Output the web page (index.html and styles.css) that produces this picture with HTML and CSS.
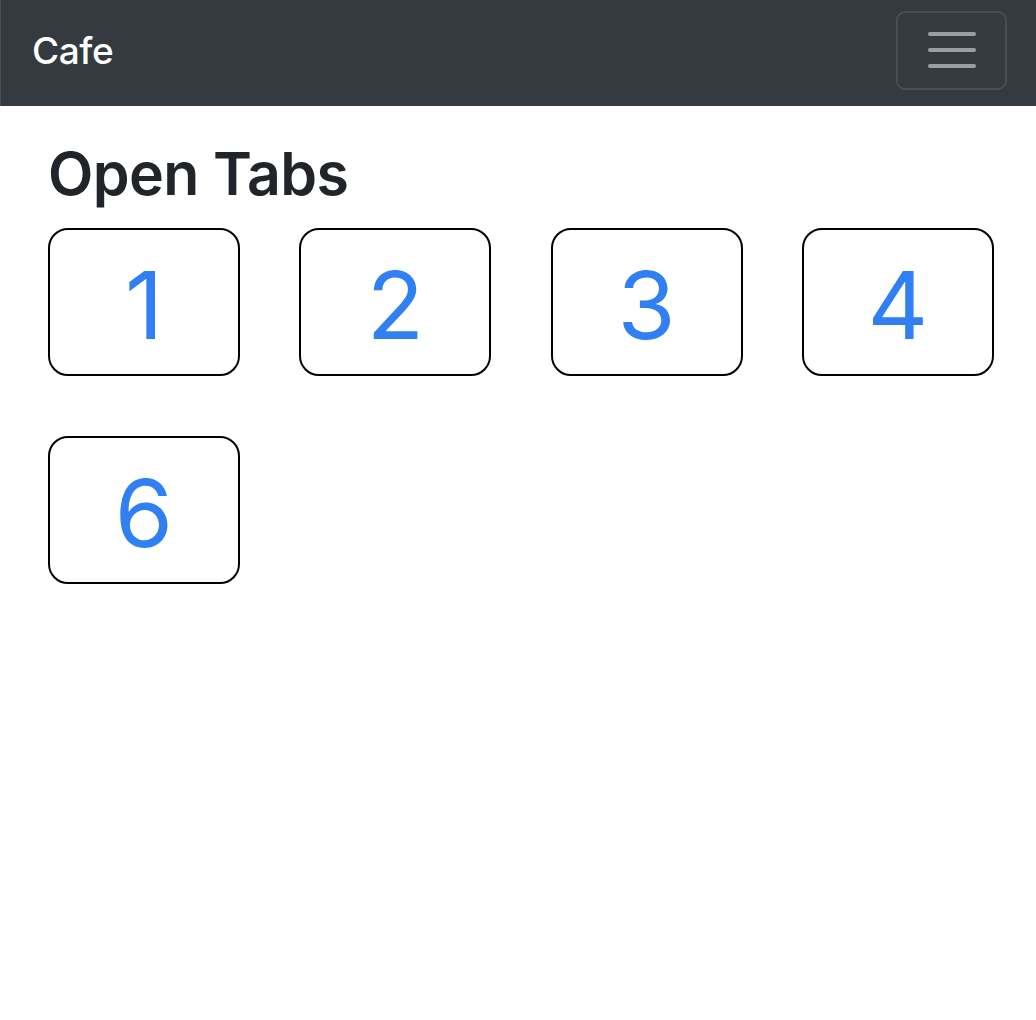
FILE: index.html
```html
<!DOCTYPE html>
<html>
<head>
<meta charset="utf-8">
<link rel="stylesheet" href="styles.css">
</head>
<body>
<nav class="navbar">
  <a class="brand">Cafe</a>
  <button class="toggler" aria-label="menu">
    <span class="bar"></span>
    <span class="bar"></span>
    <span class="bar"></span>
  </button>
</nav>
<main class="content">
  <h1 class="title">Open Tabs</h1>
  <div class="tabs">
    <div class="tab">1</div>
    <div class="tab">2</div>
    <div class="tab">3</div>
    <div class="tab">4</div>
    <div class="tab">6</div>
  </div>
</main>
</body>
</html>
```
FILE: styles.css
```css
* { box-sizing: border-box; }
html, body { margin: 0; padding: 0; background: #fff; }
body { font-family: Inter, "Liberation Sans", Arial, sans-serif; color: #212529; }

.navbar {
  height: 106px;
  background: #343a40;
  display: flex;
  align-items: center;
  justify-content: space-between;
  padding: 0 29px 0 31px;
  border-left: 1px solid #4a4f55;
}
.brand {
  color: #fff;
  font-size: 37px;
  font-weight: 500;
  letter-spacing: -0.4px;
  line-height: 1;
  margin-top: -6px;
}
.toggler {
  width: 111px;
  height: 79px;
  margin-top: -6px;
  background: transparent;
  border: 2px solid rgba(255,255,255,0.1);
  border-radius: 9px;
  display: flex;
  flex-direction: column;
  align-items: center;
  justify-content: center;
  gap: 12px;
  padding: 0;
}
.bar {
  display: block;
  width: 48px;
  height: 4px;
  border-radius: 2px;
  background: rgba(255,255,255,0.5);
}

.content { padding: 0 44px 0 48px; }
.title {
  margin: 33px 0 18px;
  font-size: 59px;
  font-weight: 600;
  line-height: 1.2;
  letter-spacing: -0.6px;
}
.tabs {
  display: grid;
  grid-template-columns: repeat(4, 192px);
  column-gap: 59.3px;
  row-gap: 60px;
}
.tab {
  height: 148px;
  border: 2px solid #000;
  border-radius: 20px;
  display: flex;
  align-items: center;
  justify-content: center;
  padding-top: 6px;
  font-size: 94px;
  font-weight: 400;
  color: #3180f3;
  line-height: 1;
}
```
